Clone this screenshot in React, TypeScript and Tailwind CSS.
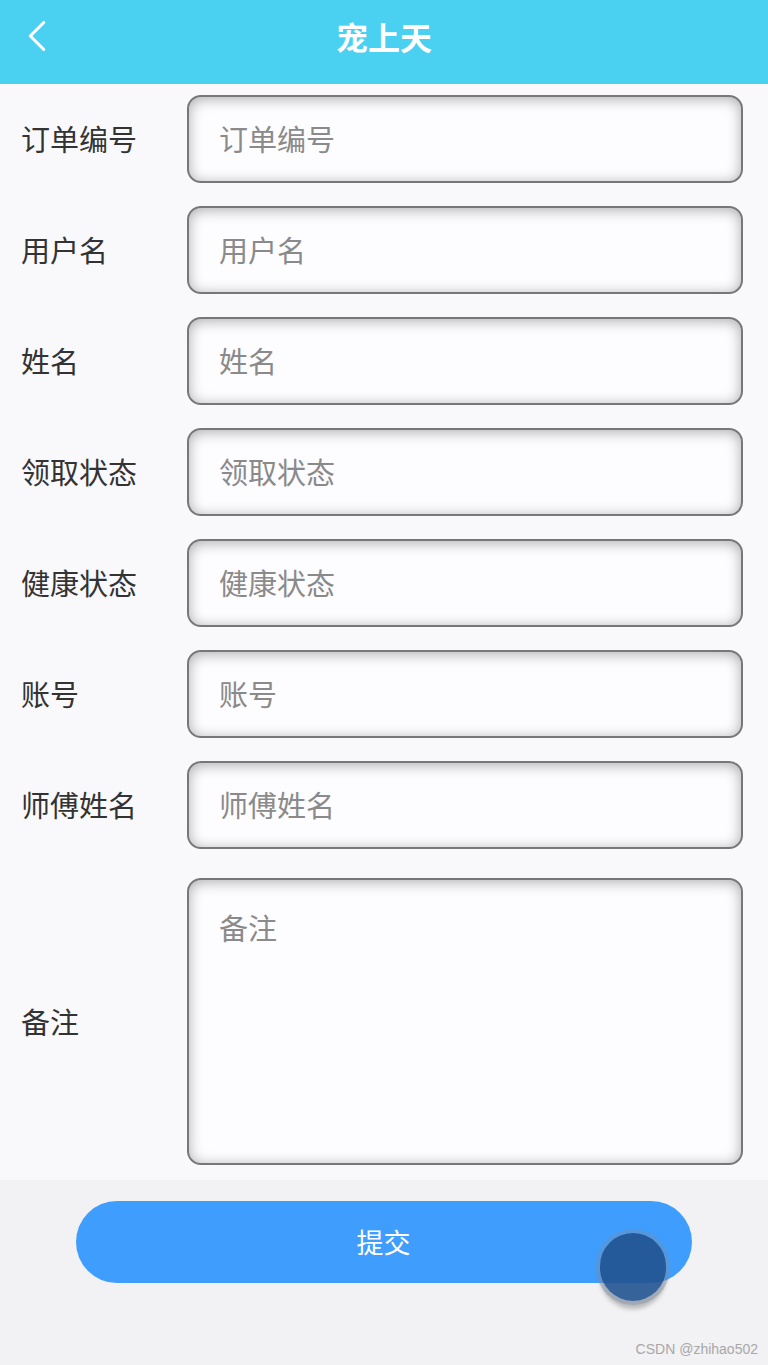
import { ChevronLeft } from 'lucide-react';

const fields = ['订单编号', '用户名', '姓名', '领取状态', '健康状态', '账号', '师傅姓名'];

const fieldBox =
  'rounded-[14px] border-2 border-[#777] bg-[#fdfcfe] shadow-[inset_0_2px_14px_rgba(0,0,0,0.32)] text-[29px] text-[#8a8a8a] pl-[30px]';

const FormRow = ({ label }: { label: string }) => (
  <div className="flex items-center h-[111px] pt-[11px] pb-[12px]">
    <div className="w-[187px] pl-[21px] text-[29px] text-[#333]">{label}</div>
    <div className={`${fieldBox} w-[556px] h-[88px] flex items-center`}>{label}</div>
  </div>
);

export default function App() {
  return (
    <div
      className="w-[768px] h-[1365px] flex flex-col bg-[#f2f1f3] overflow-hidden"
      style={{ fontFamily: '"Noto Sans CJK SC", "Noto Sans", sans-serif' }}
    >
      <header className="h-[84px] shrink-0 bg-[#4ad0f1] flex items-center relative pb-[12px]">
        <ChevronLeft className="absolute left-[10px] top-[9px] text-white" size={54} strokeWidth={1.4} />
        <h1 className="w-full text-center text-white font-bold text-[32px] leading-none">宠上天</h1>
      </header>

      <main className="bg-[#f9f8fa] pb-[15px]">
        {fields.map((f) => (
          <FormRow key={f} label={f} />
        ))}
        <div className="flex items-center pt-[17px]">
          <div className="w-[187px] pl-[21px] text-[29px] text-[#333]">备注</div>
          <div className={`${fieldBox} w-[556px] h-[287px] pt-[26px]`}>备注</div>
        </div>
      </main>

      <div className="flex justify-center pt-[21px] relative">
        <button className="w-[616px] h-[82px] rounded-full bg-[#3f9dfd] text-white text-[27px] ml-[-1px]">
          提交
        </button>
        <span className="absolute left-[600px] top-[53px] w-[66px] h-[68px] rounded-full bg-[#21538f]/90 ring-[4px] ring-[#7b8fa7]/40 shadow-[0_8px_4px_rgba(120,120,120,0.45)]" />
      </div>

      <div className="mt-auto pb-[5px] pr-[10px] text-right text-[14px] text-[#a8a8a8]" style={{ fontFamily: '"Liberation Sans", sans-serif' }}>
        CSDN @zhihao502
      </div>
    </div>
  );
}
